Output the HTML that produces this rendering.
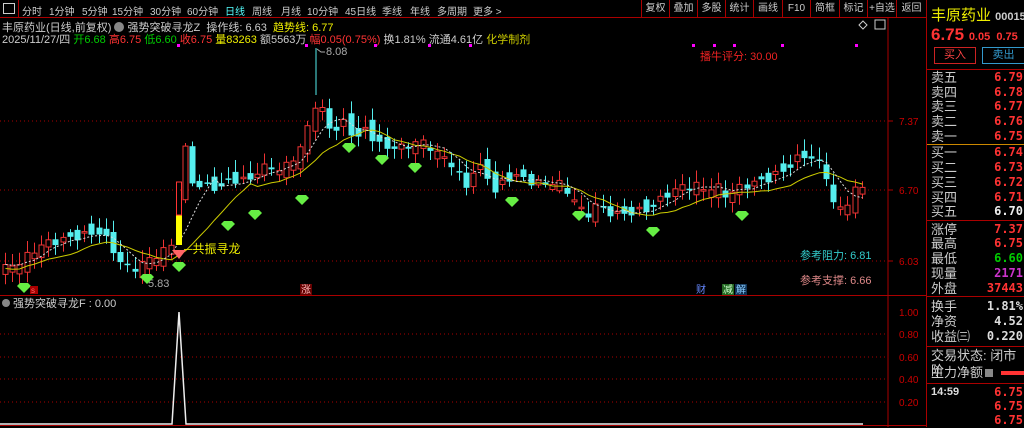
<!DOCTYPE html>
<html><head><meta charset="utf-8"><style>
*{margin:0;padding:0;box-sizing:border-box}
body{width:1024px;height:427px;background:#000;overflow:hidden;position:relative;font-family:"Liberation Sans","Noto Sans CJK SC",sans-serif;font-size:11px;color:#ccc}
.a{position:absolute;white-space:nowrap}
.tb{position:absolute;top:0;left:0;width:926px;height:18px;border-bottom:1px solid #a00}
.tb span{position:absolute;top:3px;font-size:10px;color:#ccc}
.btn{position:absolute;top:0;height:18px;border-left:1px solid #a00;color:#ccc;font-size:10px;text-align:center;line-height:17px}
.rp{position:absolute;left:926px;top:0;width:98px;height:427px;border-left:1px solid #a00}
.row{position:absolute;left:4px;width:94px;font-size:13px;color:#ccc;height:15px;line-height:15px}
.row b{position:absolute;right:2px;font-weight:bold;font-size:12px;font-family:"DejaVu Sans Mono","Liberation Mono",monospace}
.sep{position:absolute;left:0;width:98px;height:1px;background:#a00}
</style></head><body>
<div class="tb">
<div class="a" style="left:3px;top:3px;width:12px;height:11px;border:1px solid #ccc"></div>
<div class="a" style="left:18px;top:0;width:1px;height:18px;background:#a00"></div>
<span style="left:22px">分时</span><span style="left:49px">1分钟</span><span style="left:82px">5分钟</span><span style="left:112px">15分钟</span><span style="left:150px">30分钟</span><span style="left:187px">60分钟</span><span style="left:225px;color:#5ff">日线</span><span style="left:252px">周线</span><span style="left:281px">月线</span><span style="left:307px">10分钟</span><span style="left:345px">45日线</span><span style="left:382px">季线</span><span style="left:410px">年线</span><span style="left:437px">多周期</span><span style="left:473px">更多 &gt;</span>
<div class="btn" style="left:641px;width:28px">复权</div><div class="btn" style="left:669px;width:28px">叠加</div><div class="btn" style="left:697px;width:28px">多股</div><div class="btn" style="left:725px;width:28px">统计</div><div class="btn" style="left:753px;width:29px">画线</div><div class="btn" style="left:782px;width:28px">F10</div><div class="btn" style="left:810px;width:29px">简框</div><div class="btn" style="left:839px;width:28px">标记</div><div class="btn" style="left:867px;width:29px">+自选</div><div class="btn" style="left:896px;width:30px">返回</div>
</div>
<div class="a" style="left:2px;top:19px;font-size:11px;color:#ccc">丰原药业(日线,前复权) <span style="display:inline-block;width:10px;height:10px;border-radius:5px;background:#888;vertical-align:-1px"></span> 强势突破寻龙Z &nbsp;操作线: 6.63 &nbsp;<span style="color:#ee0">趋势线: 6.77</span></div>
<div class="a" style="left:2px;top:31px;font-size:11px;color:#ccc">2025/11/27/四 <span style="color:#0c0">开6.68</span> <span style="color:#f33">高6.75</span> <span style="color:#0c0">低6.60</span> <span style="color:#f33">收6.75</span> <span style="color:#ee0">量83263</span> 额5563万 <span style="color:#f33">幅0.05(0.75%)</span> 换1.81% 流通4.61亿 <span style="color:#cc0">化学制剂</span></div>
<svg class="a" style="left:0;top:0" width="926" height="427" id="sv">
<g stroke="#a00" stroke-dasharray="1,3" stroke-width="1"><line x1="0" y1="121" x2="888" y2="121"/><line x1="0" y1="190" x2="888" y2="190"/><line x1="0" y1="261" x2="888" y2="261"/><line x1="0" y1="334" x2="888" y2="334"/><line x1="0" y1="357" x2="888" y2="357"/><line x1="0" y1="379" x2="888" y2="379"/><line x1="0" y1="402" x2="888" y2="402"/></g>
<line x1="888" y1="18" x2="888" y2="427" stroke="#a00"/>
<line x1="0" y1="295.5" x2="926" y2="295.5" stroke="#a00"/>
<line x1="0" y1="425.5" x2="926" y2="425.5" stroke="#a00"/>
<g fill="#c00" font-size="10" font-family="Liberation Sans"><text x="899" y="125">7.37</text><text x="899" y="194">6.70</text><text x="899" y="265">6.03</text><text x="899" y="316">1.00</text><text x="899" y="338">0.80</text><text x="899" y="361">0.60</text><text x="899" y="383">0.40</text><text x="899" y="406">0.20</text></g>
<g stroke="#a00"><line x1="888" y1="121" x2="893" y2="121"/><line x1="888" y1="190" x2="893" y2="190"/><line x1="888" y1="261" x2="893" y2="261"/></g>
<g id="cd"></g>
<polyline id="ma" fill="none" stroke="#cc0" stroke-width="1"/>
<polyline id="ma2" fill="none" stroke="#ddd" stroke-width="1" stroke-dasharray="2,2"/>
<g fill="#f0f"><rect x="177" y="44" width="3" height="3"/><rect x="305" y="44" width="3" height="3"/><rect x="374" y="44" width="3" height="3"/><rect x="428" y="44" width="3" height="3"/><rect x="469" y="44" width="3" height="3"/><rect x="692" y="44" width="3" height="3"/><rect x="713" y="44" width="3" height="3"/><rect x="733" y="44" width="3" height="3"/><rect x="781" y="44" width="3" height="3"/><rect x="855" y="44" width="3" height="3"/></g>
<path d="M863 21 l4 4 -4 4 -4 -4z" fill="none" stroke="#ccc"/><rect x="875" y="20" width="10" height="9" fill="none" stroke="#ccc"/>
<rect x="176" y="215" width="6" height="30" fill="#ff0"/><rect x="176.5" y="182" width="5" height="33" fill="none" stroke="#f33"/>
<line x1="316" y1="48" x2="316" y2="95" stroke="#5ee"/><path d="M317 49 l4 3 h4" stroke="#aaa" fill="none"/>
<text x="326" y="55" fill="#aaa" font-size="11">8.08</text>
<text x="148" y="287" fill="#aaa" font-size="11">5.83</text>
<text x="184" y="253" fill="#ee0" font-size="12">─共振寻龙</text>
<path d="M172 250 h14 l-7 9z" fill="#f66"/>
<g fill="#6e4" id="dm"></g>
<text x="700" y="60" fill="#e22" font-size="11">播牛评分: 30.00</text>
<text x="800" y="259" fill="#3cc" font-size="11">参考阻力: 6.81</text>
<text x="800" y="284" fill="#d88" font-size="11">参考支撑: 6.66</text>
<rect x="30" y="286" width="8" height="8" fill="#a00"/><text x="31" y="293" fill="#f66" font-size="8">s</text>
<rect x="300" y="284" width="12" height="11" fill="#600"/><text x="301" y="293" fill="#fbb" font-size="10">涨</text>
<text x="696" y="293" fill="#68f" font-size="10">财</text>
<rect x="722" y="284" width="12" height="11" fill="#262"/><text x="723" y="293" fill="#cfc" font-size="10">减</text>
<rect x="735" y="284" width="12" height="11" fill="#135"/><text x="736" y="293" fill="#8cf" font-size="10">解</text>
<circle cx="6" cy="303" r="4" fill="#888"/>
<text x="13" y="307" fill="#ccc" font-size="11">强势突破寻龙F : 0.00</text>
<polyline points="0,424 172,424 179,312 186,424 863,424" fill="none" stroke="#eee" stroke-width="1.5"/>
</svg>
<div class="rp">
<div class="a" style="left:4px;top:4px;font-size:15px;color:#ee0">丰原药业 <span style="font-size:11px;color:#ccc;font-weight:bold">000153</span></div>
<div class="a" style="left:4px;top:25px;font-size:17px;color:#f33;font-weight:bold">6.75 <span style="font-size:11px">0.05 &nbsp;0.75</span></div>
<div class="a" style="left:7px;top:47px;width:42px;height:17px;border:1px solid #c22;color:#f44;text-align:center;line-height:15px">买入</div>
<div class="a" style="left:55px;top:47px;width:43px;height:17px;border:1px solid #39c;color:#39c;text-align:center;line-height:15px">卖出</div>
<div class="sep" style="top:69px"></div>
<div class="row" style="top:70px">卖五<b style="color:#f33">6.79</b></div>
<div class="row" style="top:85px">卖四<b style="color:#f33">6.78</b></div>
<div class="row" style="top:99px">卖三<b style="color:#f33">6.77</b></div>
<div class="row" style="top:114px">卖二<b style="color:#f33">6.76</b></div>
<div class="row" style="top:129px">卖一<b style="color:#f33">6.75</b></div>
<div class="sep" style="top:144px;background:#c80"></div>
<div class="row" style="top:145px">买一<b style="color:#f33">6.74</b></div>
<div class="row" style="top:160px">买二<b style="color:#f33">6.73</b></div>
<div class="row" style="top:175px">买三<b style="color:#f33">6.72</b></div>
<div class="row" style="top:190px">买四<b style="color:#f33">6.71</b></div>
<div class="row" style="top:204px">买五<b style="color:#eee">6.70</b></div>
<div class="sep" style="top:220px"></div>
<div class="row" style="top:222px">涨停<b style="color:#f33">7.37</b></div>
<div class="row" style="top:236px">最高<b style="color:#f33">6.75</b></div>
<div class="row" style="top:251px">最低<b style="color:#0c0">6.60</b></div>
<div class="row" style="top:266px">现量<b style="color:#c3c">2171</b></div>
<div class="row" style="top:281px">外盘<b style="color:#f33">37443</b></div>
<div class="sep" style="top:296px"></div>
<div class="row" style="top:299px">换手<b style="color:#ddd">1.81%</b></div>
<div class="row" style="top:314px">净资<b style="color:#ddd">4.52</b></div>
<div class="row" style="top:329px">收益㈢<b style="color:#ddd">0.220</b></div>
<div class="sep" style="top:346px"></div>
<div class="row" style="top:348px">交易状态: 闭市阶</div>
<div class="row" style="top:365px">主力净额<span style="display:inline-block;width:8px;height:8px;background:#888;margin-left:2px"></span><span style="position:absolute;left:70px;top:6px;width:24px;height:4px;background:#f33"></span></div>
<div class="sep" style="top:383px"></div>
<div class="row" style="top:385px;font-size:11px;font-weight:bold;color:#ddd">14:59<b style="color:#f33">6.75</b></div>
<div class="row" style="top:399px"><b style="color:#f33">6.75</b></div>
<div class="row" style="top:413px"><b style="color:#f33">6.75</b></div>
</div>
<script>
(function(){
var K=[[5,268],[20,262],[40,245],[60,240],[80,236],[100,232],[110,245],[120,262],[130,270],[140,265],[150,258],[170,248],[185,150],[192,180],[200,188],[210,185],[220,190],[230,178],[240,182],[250,178],[260,170],[270,165],[280,172],[290,160],[300,150],[310,118],[318,95],[325,125],[335,130],[345,122],[355,140],[365,130],[375,140],[385,150],[395,145],[405,150],[415,140],[425,145],[435,150],[445,160],[455,165],[465,190],[475,165],[485,172],[495,192],[505,180],[515,175],[525,180],[545,185],[555,180],[565,190],[575,200],[585,218],[595,205],[605,210],[615,215],[635,212],[645,210],[655,205],[665,195],[675,190],[685,185],[695,185],[705,190],[715,185],[725,195],[735,190],[745,185],[765,180],[775,175],[785,170],[795,160],[805,155],[815,160],[825,172],[835,212],[845,205],[855,190],[865,185]];
function at(x){for(var i=0;i<K.length-1;i++){if(x<=K[i+1][0]){var t=(x-K[i][0])/(K[i+1][0]-K[i][0]);return K[i][1]+t*(K[i+1][1]-K[i][1]);}}return K[K.length-1][1];}
var g='',prev=at(5),cl=[],xs=[];
for(var x=5;x<=866;x+=7.2){if(x>173&&x<184){prev=at(x);continue;}
var c=at(x)+Math.sin(x*2.3)*4,o=prev+(Math.sin(x*1.7)*8);var tp=Math.min(o,c),h=Math.max(Math.abs(o-c),1.5);
var hi=tp-3-Math.abs(Math.sin(x*0.9))*9,lo=tp+h+2+Math.abs(Math.cos(x*1.3))*8;
var up=c<o;var col=up?'#e33':'#5ee';var cx=Math.round(x)+0.5;
g+='<line x1="'+cx+'" y1="'+hi.toFixed(1)+'" x2="'+cx+'" y2="'+lo.toFixed(1)+'" stroke="'+col+'"/>';
if(up)g+='<rect x="'+(cx-2.5)+'" y="'+tp.toFixed(1)+'" width="5" height="'+h.toFixed(1)+'" fill="#000" stroke="'+col+'"/>';
else g+='<rect x="'+(cx-3)+'" y="'+tp.toFixed(1)+'" width="6" height="'+h.toFixed(1)+'" fill="'+col+'"/>';
prev=c;cl.push(c);xs.push(cx);}
document.getElementById('cd').innerHTML=g;
var p='',q='';for(var i=0;i<cl.length;i++){var s=0,n=0,s2=0,n2=0;for(var j=Math.max(0,i-9);j<=i;j++){s+=cl[j];n++;}for(var j=Math.max(0,i-4);j<=i;j++){s2+=cl[j];n2++;}p+=xs[i]+','+(s/n+4).toFixed(1)+' ';q+=xs[i]+','+(s2/n2).toFixed(1)+' ';}
document.getElementById('ma').setAttribute('points',p);document.getElementById('ma2').setAttribute('points',q);
var D=[[24,289],[147,280],[179,268],[228,227],[255,216],[302,201],[349,149],[382,161],[415,169],[512,203],[579,217],[653,233],[742,217]],d='';
D.forEach(function(a){d+='<path d="M'+(a[0]-7)+' '+(a[1]-3)+' l3 -3 h8 l3 3 -7 7z"/>';});
document.getElementById('dm').innerHTML=d;
})();
</script>
</body></html>
